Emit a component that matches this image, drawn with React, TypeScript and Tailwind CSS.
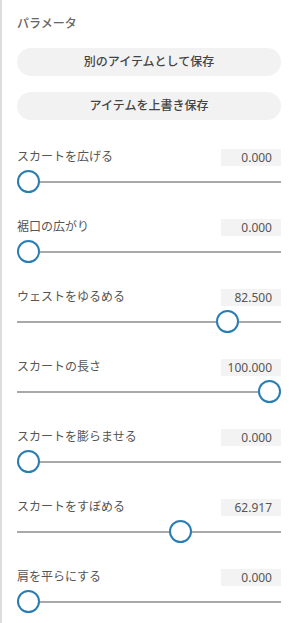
import React from "react";

const sliders: { label: string; value: number }[] = [
  { label: "スカートを広げる", value: 0 },
  { label: "裾口の広がり", value: 0 },
  { label: "ウェストをゆるめる", value: 82.5 },
  { label: "スカートの長さ", value: 100 },
  { label: "スカートを膨らませる", value: 0 },
  { label: "スカートをすぼめる", value: 62.917 },
  { label: "肩を平らにする", value: 0 },
];

function Slider({ label, value }: { label: string; value: number }) {
  return (
    <div className="mb-[21px]">
      <div className="flex h-[18px] items-center justify-between">
        <span className="text-[12px] leading-[18px] text-[#555]">{label}</span>
        <span className="h-[17px] w-[60px] bg-[#f3f3f3] pr-[9px] text-right text-[12px] leading-[17px] text-[#555]">
          {value.toFixed(3)}
        </span>
      </div>
      <div className="relative flex h-[31px] items-center">
        <div className="h-[2px] w-full bg-[#a9a9a9]" />
        <div
          className="absolute top-[4px] h-[23px] w-[23px] rounded-full border-2 border-[#2a7db3] bg-white"
          style={{ left: `${(value / 100) * 241}px` }}
        />
      </div>
    </div>
  );
}

export default function App() {
  return (
    <div className="h-[623px] w-[289px] overflow-hidden border-l-2 border-[#dcdcdc] bg-white pl-[15px] pr-[8px] font-['Noto_Sans','Noto_Sans_CJK_JP',sans-serif] text-[#555]">
      <div className="pt-[16px] text-[12px] font-medium leading-[16px] text-[#666]">パラメータ</div>
      <button className="mt-[16px] flex h-[28px] w-full items-center justify-center rounded-full bg-[#f2f2f2] text-[12px] font-medium text-[#444]">
        別のアイテムとして保存
      </button>
      <button className="mt-[16px] flex h-[28px] w-full items-center justify-center rounded-full bg-[#f2f2f2] text-[12px] font-medium text-[#444]">
        アイテムを上書き保存
      </button>
      <div className="mt-[28px]">
        {sliders.map((s) => (
          <Slider key={s.label} label={s.label} value={s.value} />
        ))}
      </div>
    </div>
  );
}
